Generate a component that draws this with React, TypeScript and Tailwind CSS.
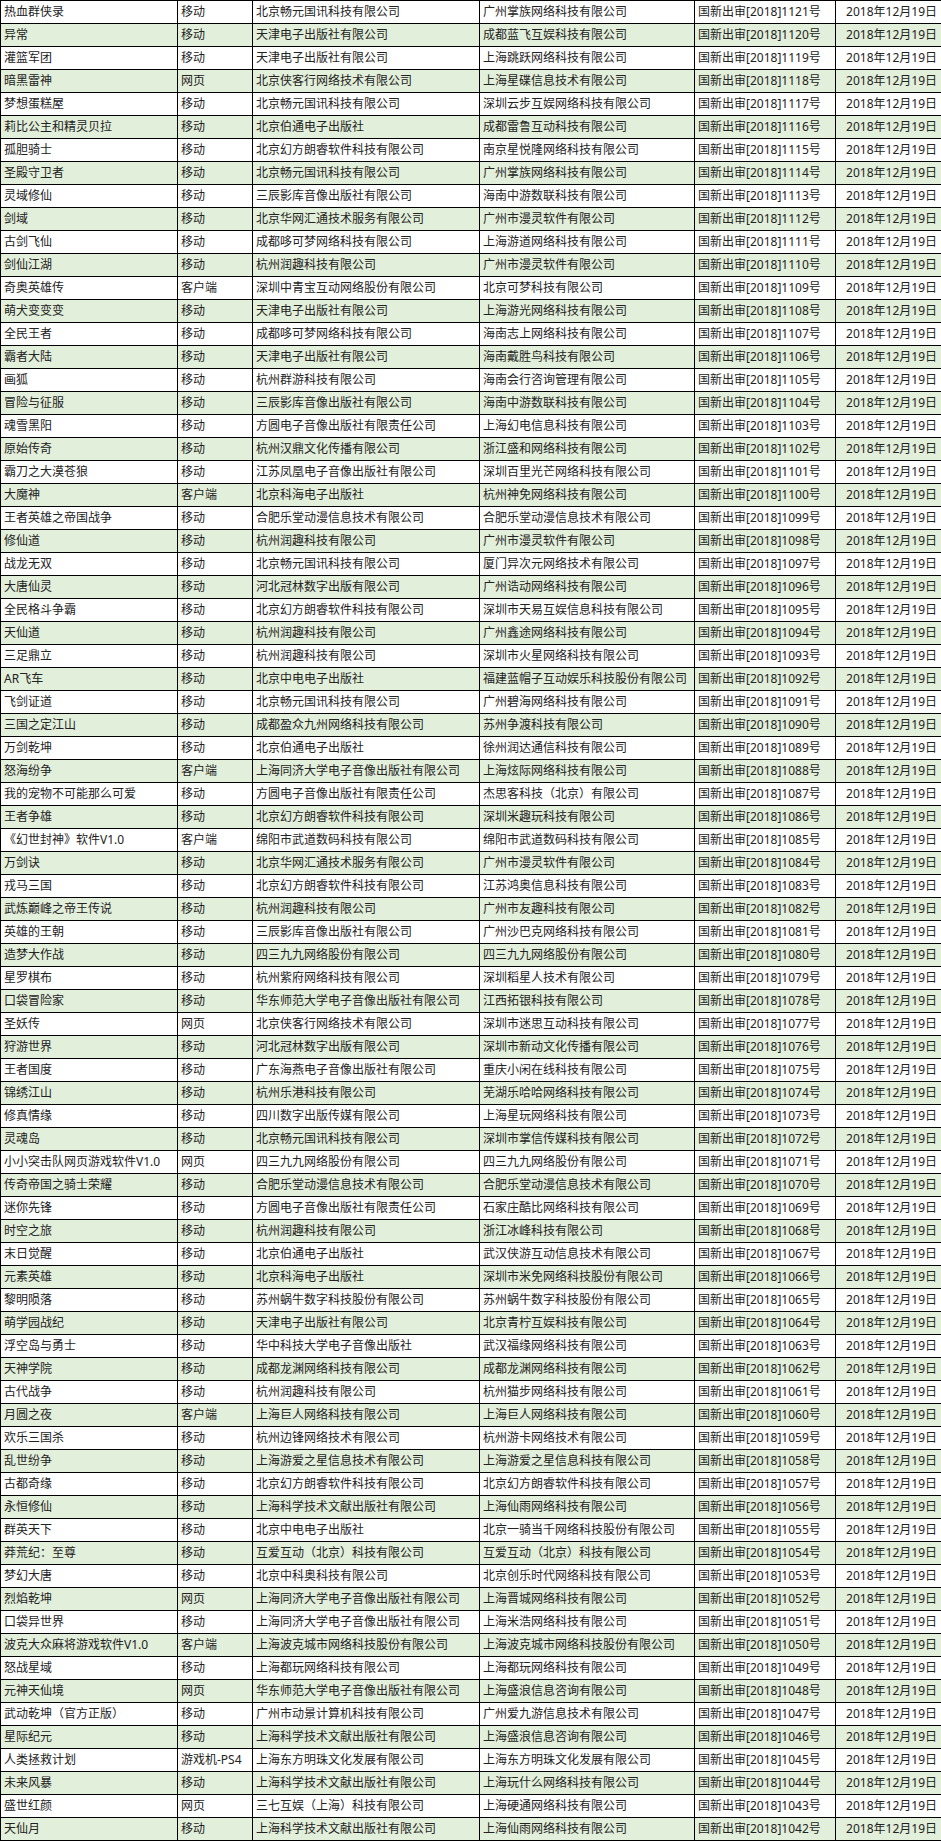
const rows: [string, string, string, string, number][] = [
  ['热血群侠录', '移动', '北京畅元国讯科技有限公司', '广州掌族网络科技有限公司', 1121],
  ['异常', '移动', '天津电子出版社有限公司', '成都蓝飞互娱科技有限公司', 1120],
  ['灌篮军团', '移动', '天津电子出版社有限公司', '上海跳跃网络科技有限公司', 1119],
  ['暗黑雷神', '网页', '北京侠客行网络技术有限公司', '上海星碟信息技术有限公司', 1118],
  ['梦想蛋糕屋', '移动', '北京畅元国讯科技有限公司', '深圳云步互娱网络科技有限公司', 1117],
  ['莉比公主和精灵贝拉', '移动', '北京伯通电子出版社', '成都雷鲁互动科技有限公司', 1116],
  ['孤胆骑士', '移动', '北京幻方朗睿软件科技有限公司', '南京星悦隆网络科技有限公司', 1115],
  ['圣殿守卫者', '移动', '北京畅元国讯科技有限公司', '广州掌族网络科技有限公司', 1114],
  ['灵域修仙', '移动', '三辰影库音像出版社有限公司', '海南中游数联科技有限公司', 1113],
  ['剑域', '移动', '北京华网汇通技术服务有限公司', '广州市漫灵软件有限公司', 1112],
  ['古剑飞仙', '移动', '成都哆可梦网络科技有限公司', '上海游道网络科技有限公司', 1111],
  ['剑仙江湖', '移动', '杭州润趣科技有限公司', '广州市漫灵软件有限公司', 1110],
  ['奇奥英雄传', '客户端', '深圳中青宝互动网络股份有限公司', '北京可梦科技有限公司', 1109],
  ['萌犬变变变', '移动', '天津电子出版社有限公司', '上海游光网络科技有限公司', 1108],
  ['全民王者', '移动', '成都哆可梦网络科技有限公司', '海南志上网络科技有限公司', 1107],
  ['霸者大陆', '移动', '天津电子出版社有限公司', '海南戴胜鸟科技有限公司', 1106],
  ['画狐', '移动', '杭州群游科技有限公司', '海南会行咨询管理有限公司', 1105],
  ['冒险与征服', '移动', '三辰影库音像出版社有限公司', '海南中游数联科技有限公司', 1104],
  ['魂雪黑阳', '移动', '方圆电子音像出版社有限责任公司', '上海幻电信息科技有限公司', 1103],
  ['原始传奇', '移动', '杭州汉鼎文化传播有限公司', '浙江盛和网络科技有限公司', 1102],
  ['霸刀之大漠苍狼', '移动', '江苏凤凰电子音像出版社有限公司', '深圳百里光芒网络科技有限公司', 1101],
  ['大魔神', '客户端', '北京科海电子出版社', '杭州神免网络科技有限公司', 1100],
  ['王者英雄之帝国战争', '移动', '合肥乐堂动漫信息技术有限公司', '合肥乐堂动漫信息技术有限公司', 1099],
  ['修仙道', '移动', '杭州润趣科技有限公司', '广州市漫灵软件有限公司', 1098],
  ['战龙无双', '移动', '北京畅元国讯科技有限公司', '厦门异次元网络技术有限公司', 1097],
  ['大唐仙灵', '移动', '河北冠林数字出版有限公司', '广州诰动网络科技有限公司', 1096],
  ['全民格斗争霸', '移动', '北京幻方朗睿软件科技有限公司', '深圳市天易互娱信息科技有限公司', 1095],
  ['天仙道', '移动', '杭州润趣科技有限公司', '广州鑫途网络科技有限公司', 1094],
  ['三足鼎立', '移动', '杭州润趣科技有限公司', '深圳市火星网络科技有限公司', 1093],
  ['AR飞车', '移动', '北京中电电子出版社', '福建蓝帽子互动娱乐科技股份有限公司', 1092],
  ['飞剑证道', '移动', '北京畅元国讯科技有限公司', '广州碧海网络科技有限公司', 1091],
  ['三国之定江山', '移动', '成都盈众九州网络科技有限公司', '苏州争渡科技有限公司', 1090],
  ['万剑乾坤', '移动', '北京伯通电子出版社', '徐州润达通信科技有限公司', 1089],
  ['怒海纷争', '客户端', '上海同济大学电子音像出版社有限公司', '上海炫际网络科技有限公司', 1088],
  ['我的宠物不可能那么可爱', '移动', '方圆电子音像出版社有限责任公司', '杰思客科技（北京）有限公司', 1087],
  ['王者争雄', '移动', '北京幻方朗睿软件科技有限公司', '深圳米趣玩科技有限公司', 1086],
  ['《幻世封神》软件V1.0', '客户端', '绵阳市武道数码科技有限公司', '绵阳市武道数码科技有限公司', 1085],
  ['万剑诀', '移动', '北京华网汇通技术服务有限公司', '广州市漫灵软件有限公司', 1084],
  ['戎马三国', '移动', '北京幻方朗睿软件科技有限公司', '江苏鸿奥信息科技有限公司', 1083],
  ['武炼巅峰之帝王传说', '移动', '杭州润趣科技有限公司', '广州市友趣科技有限公司', 1082],
  ['英雄的王朝', '移动', '三辰影库音像出版社有限公司', '广州沙巴克网络科技有限公司', 1081],
  ['造梦大作战', '移动', '四三九九网络股份有限公司', '四三九九网络股份有限公司', 1080],
  ['星罗棋布', '移动', '杭州紫府网络科技有限公司', '深圳稻星人技术有限公司', 1079],
  ['口袋冒险家', '移动', '华东师范大学电子音像出版社有限公司', '江西拓银科技有限公司', 1078],
  ['圣妖传', '网页', '北京侠客行网络技术有限公司', '深圳市迷思互动科技有限公司', 1077],
  ['狩游世界', '移动', '河北冠林数字出版有限公司', '深圳市新动文化传播有限公司', 1076],
  ['王者国度', '移动', '广东海燕电子音像出版社有限公司', '重庆小闲在线科技有限公司', 1075],
  ['锦绣江山', '移动', '杭州乐港科技有限公司', '芜湖乐哈哈网络科技有限公司', 1074],
  ['修真情缘', '移动', '四川数字出版传媒有限公司', '上海星玩网络科技有限公司', 1073],
  ['灵魂岛', '移动', '北京畅元国讯科技有限公司', '深圳市掌信传媒科技有限公司', 1072],
  ['小小突击队网页游戏软件V1.0', '网页', '四三九九网络股份有限公司', '四三九九网络股份有限公司', 1071],
  ['传奇帝国之骑士荣耀', '移动', '合肥乐堂动漫信息技术有限公司', '合肥乐堂动漫信息技术有限公司', 1070],
  ['迷你先锋', '移动', '方圆电子音像出版社有限责任公司', '石家庄酷比网络科技有限公司', 1069],
  ['时空之旅', '移动', '杭州润趣科技有限公司', '浙江冰峰科技有限公司', 1068],
  ['末日觉醒', '移动', '北京伯通电子出版社', '武汉侠游互动信息技术有限公司', 1067],
  ['元素英雄', '移动', '北京科海电子出版社', '深圳市米免网络科技股份有限公司', 1066],
  ['黎明陨落', '移动', '苏州蜗牛数字科技股份有限公司', '苏州蜗牛数字科技股份有限公司', 1065],
  ['萌学园战纪', '移动', '天津电子出版社有限公司', '北京青柠互娱科技有限公司', 1064],
  ['浮空岛与勇士', '移动', '华中科技大学电子音像出版社', '武汉福缘网络科技有限公司', 1063],
  ['天神学院', '移动', '成都龙渊网络科技有限公司', '成都龙渊网络科技有限公司', 1062],
  ['古代战争', '移动', '杭州润趣科技有限公司', '杭州猫步网络科技有限公司', 1061],
  ['月圆之夜', '客户端', '上海巨人网络科技有限公司', '上海巨人网络科技有限公司', 1060],
  ['欢乐三国杀', '移动', '杭州边锋网络技术有限公司', '杭州游卡网络技术有限公司', 1059],
  ['乱世纷争', '移动', '上海游爱之星信息技术有限公司', '上海游爱之星信息科技有限公司', 1058],
  ['古都奇缘', '移动', '北京幻方朗睿软件科技有限公司', '北京幻方朗睿软件科技有限公司', 1057],
  ['永恒修仙', '移动', '上海科学技术文献出版社有限公司', '上海仙雨网络科技有限公司', 1056],
  ['群英天下', '移动', '北京中电电子出版社', '北京一骑当千网络科技股份有限公司', 1055],
  ['莽荒纪：至尊', '移动', '互爱互动（北京）科技有限公司', '互爱互动（北京）科技有限公司', 1054],
  ['梦幻大唐', '移动', '北京中科奥科技有限公司', '北京创乐时代网络科技有限公司', 1053],
  ['烈焰乾坤', '网页', '上海同济大学电子音像出版社有限公司', '上海晋城网络科技有限公司', 1052],
  ['口袋异世界', '移动', '上海同济大学电子音像出版社有限公司', '上海米浩网络科技有限公司', 1051],
  ['波克大众麻将游戏软件V1.0', '客户端', '上海波克城市网络科技股份有限公司', '上海波克城市网络科技股份有限公司', 1050],
  ['怒战星域', '移动', '上海都玩网络科技有限公司', '上海都玩网络科技有限公司', 1049],
  ['元神天仙境', '网页', '华东师范大学电子音像出版社有限公司', '上海盛浪信息咨询有限公司', 1048],
  ['武动乾坤（官方正版）', '移动', '广州市动景计算机科技有限公司', '广州爱九游信息技术有限公司', 1047],
  ['星际纪元', '移动', '上海科学技术文献出版社有限公司', '上海盛浪信息咨询有限公司', 1046],
  ['人类拯救计划', '游戏机-PS4', '上海东方明珠文化发展有限公司', '上海东方明珠文化发展有限公司', 1045],
  ['未来风暴', '移动', '上海科学技术文献出版社有限公司', '上海玩什么网络科技有限公司', 1044],
  ['盛世红颜', '网页', '三七互娱（上海）科技有限公司', '上海硬通网络科技有限公司', 1043],
  ['天仙月', '移动', '上海科学技术文献出版社有限公司', '上海仙雨网络科技有限公司', 1042],
]

export default function App() {
  return (
    <div className="w-[941px] bg-white">
      <table className="w-[941px] table-fixed border-collapse font-['Noto_Sans','Noto_Sans_CJK_SC',sans-serif] text-[12px] leading-[22px] text-[#222]">
        <colgroup>
          <col className="w-[177px]" />
          <col className="w-[75px]" />
          <col className="w-[227px]" />
          <col className="w-[215px]" />
          <col className="w-[141px]" />
          <col className="w-[106px]" />
        </colgroup>
        <tbody>
          {rows.map(([name, type, publisher, operator, no], i) => (
            <tr key={no} className={i % 2 === 1 ? 'h-[22px] bg-[#e2efda]' : 'h-[22px] bg-white'}>
              <td className="border border-black p-0 pl-[3px] whitespace-nowrap overflow-hidden">{name}</td>
              <td className="border border-black p-0 pl-[3px] whitespace-nowrap overflow-hidden">{type}</td>
              <td className="border border-black p-0 pl-[3px] whitespace-nowrap overflow-hidden">{publisher}</td>
              <td className="border border-black p-0 pl-[3px] whitespace-nowrap overflow-hidden">{operator}</td>
              <td className="border border-black p-0 pl-[3px] whitespace-nowrap overflow-hidden">
                国新出审[2018]{no}号
              </td>
              <td className="border border-black p-0 pr-[4px] text-right whitespace-nowrap overflow-hidden">
                2018年12月19日
              </td>
            </tr>
          ))}
        </tbody>
      </table>
    </div>
  )
}
